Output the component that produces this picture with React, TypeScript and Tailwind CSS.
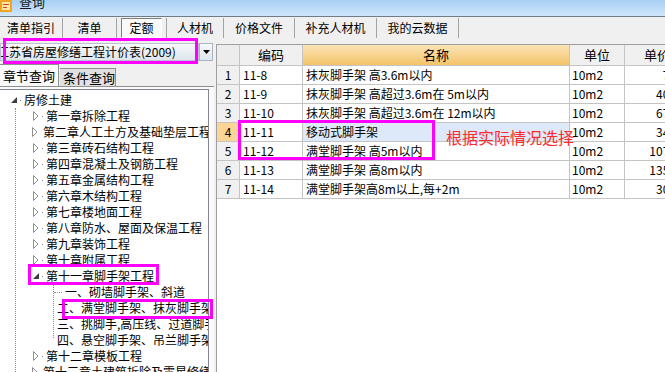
const topTabs: [string, number][] = [
  ["清单指引", 63],
  ["清单", 54],
  ["定额", 50],
  ["人材机", 57],
  ["价格文件", 71],
  ["补充人材机", 82],
  ["我的云数据", 82],
];

type TreeItem = { label: string; level: number; open?: boolean };

const tree: TreeItem[] = [
  { label: "房修土建", level: 0, open: true },
  { label: "第一章拆除工程", level: 1 },
  { label: "第二章人工土方及基础垫层工程", level: 1 },
  { label: "第三章砖石结构工程", level: 1 },
  { label: "第四章混凝土及钢筋工程", level: 1 },
  { label: "第五章金属结构工程", level: 1 },
  { label: "第六章木结构工程", level: 1 },
  { label: "第七章楼地面工程", level: 1 },
  { label: "第八章防水、屋面及保温工程", level: 1 },
  { label: "第九章装饰工程", level: 1 },
  { label: "第十章附属工程", level: 1 },
  { label: "第十一章脚手架工程", level: 1, open: true },
  { label: "一、砌墙脚手架、斜道", level: 2 },
  { label: "二、满堂脚手架、抹灰脚手架", level: 2 },
  { label: "三、挑脚手,高压线、过道脚手架", level: 2 },
  { label: "四、悬空脚手架、吊兰脚手架", level: 2 },
  { label: "第十二章模板工程", level: 1 },
  { label: "第十三章土建筑拆除及零星修缮工程", level: 1 },
];

const rows = [
  ["1", "11-8", "抹灰脚手架 高3.6m以内", "10m2", "7.23"],
  ["2", "11-9", "抹灰脚手架 高超过3.6m在 5m以内", "10m2", "40.35"],
  ["3", "11-10", "抹灰脚手架 高超过3.6m在 12m以内", "10m2", "67.35"],
  ["4", "11-11", "移动式脚手架", "10m2", "34.83"],
  ["5", "11-12", "满堂脚手架 高5m以内", "10m2", "107.79"],
  ["6", "11-13", "满堂脚手架 高8m以内", "10m2", "135.03"],
  ["7", "11-14", "满堂脚手架高8m以上,每+2m", "10m2", "30.37"],
];

function Arrow({ open }: { open?: boolean }) {
  if (open) {
    return (
      <svg width="7" height="7" viewBox="0 0 7 7" className="shrink-0">
        <polygon points="6,0 6,6 0,6" fill="#3c3c3c" />
      </svg>
    );
  }
  return (
    <svg width="6" height="10" viewBox="0 0 6 10" className="shrink-0">
      <polygon points="0.5,0.5 5,5 0.5,9.5" fill="#fff" stroke="#8e8e8e" />
    </svg>
  );
}

function TreeRow({ item }: { item: TreeItem }) {
  if (item.level === 2) {
    return (
      <div className="h-[16px] flex items-center pl-[54px] whitespace-nowrap">
        <div className="w-[8px] border-t border-dotted border-[#8a8a8a] mr-[3px]" />
        <span>{item.label}</span>
      </div>
    );
  }
  const pl = item.level === 0 ? "pl-[10px]" : "pl-[32px]";
  return (
    <div className={`h-[16px] flex items-center whitespace-nowrap ${pl}`}>
      <div className="w-[8px] flex justify-center">
        <Arrow open={item.open} />
      </div>
      <div className="w-[1px] h-[1px] bg-[#8a8a8a] mx-[2px]" />
      <span className="ml-[1px]">{item.label}</span>
    </div>
  );
}

export default function App() {
  return (
    <div className="w-[665px] h-[372px] overflow-hidden relative bg-[#f0f0f0] text-[12px] leading-[16px] text-black font-['Noto_Sans_CJK_SC',sans-serif]">
      {/* 标题栏 */}
      <div className="h-[16px] bg-gradient-to-b from-[#a6cff3] to-[#d0e7fb] flex items-end overflow-hidden">
        <svg width="13" height="13" viewBox="0 0 13 13" className="ml-[0px] mb-[3px] -mt-[2px]">
          <rect x="0" y="0" width="12" height="12" rx="1" fill="#f2a21c" />
          <rect x="2" y="2" width="8" height="8" fill="#fde7a6" />
          <rect x="3" y="4" width="6" height="1" fill="#d9411e" />
          <rect x="3" y="7" width="4" height="1" fill="#d9411e" />
        </svg>
        <span className="ml-[6px] text-[13px] leading-[16px] translate-y-[-6px] text-[#1a1a1a]">查询</span>
      </div>

      {/* 顶部页签 */}
      <div className="h-[22px] border-t border-[#6f7c89] flex">
        {topTabs.map(([label, w]) => (
          <div
            key={label}
            style={{ width: w }}
            className="h-[20px] mt-[1px] border-r border-[#a3a3a3] flex items-center justify-center shrink-0"
          >
            {label === "定额" ? (
              <div className="w-[41px] h-[20px] border-t border-l border-[#7f7f7f] border-b border-r border-b-white border-r-white bg-[#f9f9f9] flex items-center justify-center">
                {label}
              </div>
            ) : (
              label
            )}
          </div>
        ))}
      </div>

      <div className="flex h-[334px]">
        {/* 左侧 */}
        <div className="w-[216px] shrink-0 flex flex-col pt-[5px]">
          <div className="h-[19px] w-[213px] flex">
            <div className="flex-1 border border-[#b8c4d0] bg-gradient-to-b from-[#f7f9fb] to-[#dde5ed] flex items-center overflow-hidden whitespace-nowrap">
              <span className="-ml-[4px]">江苏省房屋修缮工程计价表(2009)</span>
            </div>
            <div className="w-[14px] border border-[#a9b5c2] bg-gradient-to-b from-[#f6f8fa] to-[#dfe6ee] flex items-center justify-center">
              <svg width="7" height="4" viewBox="0 0 7 4">
                <polygon points="0,0 7,0 3.5,4" fill="#000" />
              </svg>
            </div>
          </div>

          <div className="flex items-end mt-[3px] h-[22px]">
            <div className="w-[59px] h-[22px] bg-[#fafafa] border-t border-r border-[#8f8f8f] flex items-center pl-[3px] text-[13px]">
              章节查询
            </div>
            <div className="w-[56px] h-[18px] ml-[1px] bg-[#e1e1e1] border-t border-r border-[#8f8f8f] flex items-center pl-[3px] text-[13px]">
              条件查询
            </div>
            <div className="flex-1" />
          </div>

          <div className="flex-1 bg-[#fafafa] border-t border-[#8f8f8f] w-[214px] pt-[2px] pr-[4px]">
            <div className="relative h-full w-[209px] bg-white border-t border-r border-[#828790] pt-[2px] overflow-hidden">
              <div className="absolute left-[15px] top-[18px] bottom-0 border-l border-dotted border-[#8a8a8a]" />
              <div className="absolute left-[53px] top-[195px] h-[53px] border-l border-dotted border-[#8a8a8a]" />
              <div className="relative">
                {tree.map((t) => (
                  <TreeRow key={t.label} item={t} />
                ))}
              </div>
            </div>
          </div>
        </div>

        {/* 右侧表格 */}
        <div className="flex-1 pt-[6px] overflow-hidden">
          <div className="h-full bg-white border-l border-t border-[#a0a0a0] overflow-hidden">
            <div className="flex h-[21px] border-b border-[#c4c4c4]">
              <div className="w-[23px] shrink-0 bg-[#ececec] border-r border-[#c4c4c4]" />
              <div className="w-[63px] shrink-0 bg-[#f0f0f0] border-r border-[#c4c4c4] flex items-center justify-center text-[13px]">
                编码
              </div>
              <div className="w-[267px] shrink-0 bg-gradient-to-b from-[#fbe4b6] to-[#f3c366] border-r border-[#c4c4c4] flex items-center justify-center text-[13px]">
                名称
              </div>
              <div className="w-[55px] shrink-0 bg-[#f0f0f0] border-r border-[#c4c4c4] flex items-center justify-center text-[13px]">
                单位
              </div>
              <div className="w-[64px] shrink-0 bg-[#f0f0f0] flex items-center justify-center text-[13px]">
                单价
              </div>
            </div>
            {rows.map((r) => {
              const sel = r[0] === "4";
              return (
                <div key={r[0]} className="flex h-[19px] border-b border-[#c4c4c4] whitespace-nowrap">
                  <div
                    className={`w-[23px] shrink-0 border-r border-[#c4c4c4] flex items-center justify-center ${
                      sel ? "bg-[#fad595]" : "bg-[#f0f0f0]"
                    }`}
                  >
                    {r[0]}
                  </div>
                  <div className="w-[63px] shrink-0 border-r border-[#c4c4c4] flex items-center pl-[3px]">
                    {r[1]}
                  </div>
                  <div
                    className={`w-[267px] shrink-0 border-r border-[#c4c4c4] flex items-center pl-[3px] ${
                      sel ? "bg-[#dde9f8]" : ""
                    }`}
                  >
                    {r[2]}
                  </div>
                  <div className="w-[55px] shrink-0 border-r border-[#c4c4c4] flex items-center pl-[2px]">
                    {r[3]}
                  </div>
                  <div className="w-[64px] shrink-0 flex items-center justify-end pr-[3px]">{r[4]}</div>
                </div>
              );
            })}
          </div>
        </div>
      </div>

      {/* 标注 */}
      <div className="absolute left-[3px] top-[38px] w-[195px] h-[26px] border-[3px] border-[#ff00ff]" />
      <div className="absolute left-[28px] top-[264px] w-[131px] h-[21px] border-[3px] border-[#ff00ff]" />
      <div className="absolute left-[62px] top-[299px] w-[151px] h-[20px] border-[3px] border-[#ff00ff]" />
      <div className="absolute left-[238px] top-[120px] w-[197px] h-[40px] border-[3px] border-[#ff00ff]" />
      <div className="absolute left-[446px] top-[128px] text-[16px] leading-[18px] text-[#ff2a2a]">
        根据实际情况选择
      </div>
    </div>
  );
}
